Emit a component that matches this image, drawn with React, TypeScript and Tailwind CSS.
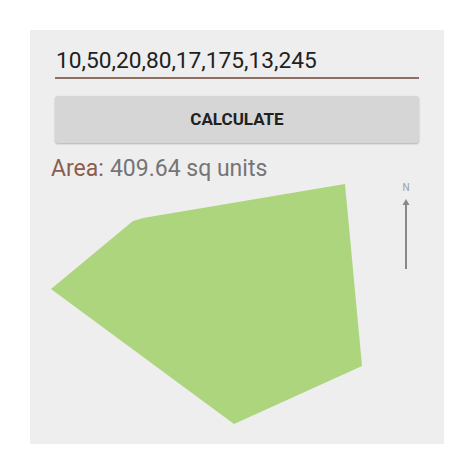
import React from 'react';

const font = { fontFamily: 'Roboto, "Noto Sans", sans-serif' };

export default function App() {
  return (
    <div className="w-[474px] h-[474px] bg-white p-[30px]" style={font}>
      <div className="w-[414px] h-[414px] bg-[#eeeeee] flex flex-col">
        <div className="mx-[25px] mt-[15px] h-[34px] border-b-2 border-[#8d6e63] flex items-center pl-[1px]">
          <span className="text-[22.7px] leading-none text-[#212121]">10,50,20,80,17,175,13,245</span>
        </div>
        <button className="mx-[25px] mt-[17px] h-[47px] rounded-[3px] bg-[#d6d6d6] shadow-[0_1px_2px_rgba(0,0,0,0.25)] flex items-center justify-center">
          <span className="text-[17px] font-bold text-[#212121]">CALCULATE</span>
        </button>
        <div className="ml-[21px] mt-[12px] h-[26px] flex items-center text-[23px] leading-none">
          <span className="text-[#8a5d4f]">Area:</span>
          <span className="text-[#757575] ml-[6px]">409.64 sq units</span>
        </div>
        <svg width="414" height="262" viewBox="0 0 414 262" className="block -mt-[2px]">
          <polygon points="315,5 332,187 204,245 21,110 103,42 113,39" fill="#acd57e" />
          <text x="376" y="12" fontSize="10" textAnchor="middle" fill="#9e9e9e" style={font}>N</text>
          <line x1="376" y1="24" x2="376" y2="90" stroke="#888888" strokeWidth="2" />
          <polygon points="376,20 372.5,26 379.5,26" fill="#888888" />
        </svg>
      </div>
    </div>
  );
}
